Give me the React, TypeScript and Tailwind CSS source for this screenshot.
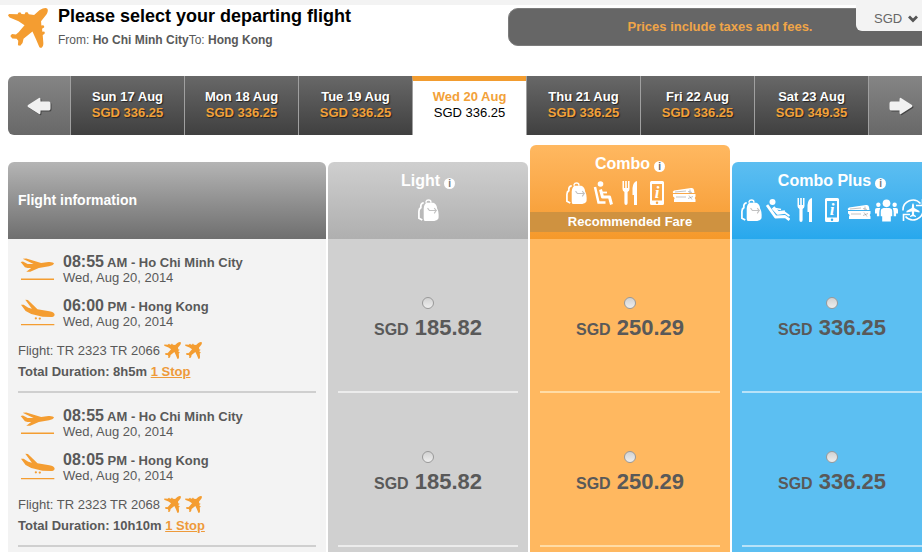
import { useState } from 'react'
import type { ReactNode } from 'react'
import clsx from 'clsx'

interface DayTab {
  label: string
  price: string
}

interface Fare {
  id: string
  name: string
  icons: (() => ReactNode)[]
  recommended?: boolean
  header: string
  cell: string
  divider: string
  info: string
}

interface Flight {
  id: string
  departTime: string
  departPeriod: string
  from: string
  arriveTime: string
  arrivePeriod: string
  to: string
  date: string
  numbers: string
  duration: string
  stops: string
  prices: Record<string, string>
}

const days: DayTab[] = [
  { label: 'Sun 17 Aug', price: 'SGD 336.25' },
  { label: 'Mon 18 Aug', price: 'SGD 336.25' },
  { label: 'Tue 19 Aug', price: 'SGD 336.25' },
  { label: 'Wed 20 Aug', price: 'SGD 336.25' },
  { label: 'Thu 21 Aug', price: 'SGD 336.25' },
  { label: 'Fri 22 Aug', price: 'SGD 336.25' },
  { label: 'Sat 23 Aug', price: 'SGD 349.35' },
]

const fares: Fare[] = [
  {
    id: 'light',
    name: 'Light',
    icons: [BagIcon],
    header: 'bg-linear-to-b from-[#cfcfcf] to-[#afafaf]',
    cell: 'bg-[#d0d0d0]',
    divider: 'border-[#ececec]',
    info: 'text-[#777]',
  },
  {
    id: 'combo',
    name: 'Combo',
    icons: [BagIcon, SeatIcon, MealIcon, PhoneIcon, TicketsIcon],
    recommended: true,
    header: 'bg-linear-to-b from-[#ffb860] to-[#f5992a]',
    cell: 'bg-[#ffb860]',
    divider: 'border-[#ffdca6]',
    info: 'text-[#666]',
  },
  {
    id: 'combo-plus',
    name: 'Combo Plus',
    icons: [BagIcon, ReclinerIcon, MealIcon, PhoneIcon, TicketsIcon, PeopleIcon, ChangeFlightIcon],
    header: 'bg-linear-to-b from-[#5cbef1] to-[#27a8ed]',
    cell: 'bg-[#5cbff2]',
    divider: 'border-[#b8e2f8]',
    info: 'text-[#777]',
  },
]

const flights: Flight[] = [
  {
    id: 'tr2066',
    departTime: '08:55',
    departPeriod: 'AM',
    from: 'Ho Chi Minh City',
    arriveTime: '06:00',
    arrivePeriod: 'PM',
    to: 'Hong Kong',
    date: 'Wed, Aug 20, 2014',
    numbers: 'TR 2323 TR 2066',
    duration: '8h5m',
    stops: '1 Stop',
    prices: { light: '185.82', combo: '250.29', 'combo-plus': '336.25' },
  },
  {
    id: 'tr2068',
    departTime: '08:55',
    departPeriod: 'AM',
    from: 'Ho Chi Minh City',
    arriveTime: '08:05',
    arrivePeriod: 'PM',
    to: 'Hong Kong',
    date: 'Wed, Aug 20, 2014',
    numbers: 'TR 2323 TR 2068',
    duration: '10h10m',
    stops: '1 Stop',
    prices: { light: '185.82', combo: '250.29', 'combo-plus': '336.25' },
  },
]

function PlaneIcon({ className }: { className?: string }) {
  return (
    <svg viewBox="24 23 121 121" fill="currentColor" className={className} aria-hidden="true">
      <path d="M143 25C146 30 144 38 139 44L124 63L125 76L130 75Q135 77 133 82L127 86L128 95L133 94Q137 97 134 102L129 105L131 130Q131 141 124 144L119 142L109 118L98 94L71 116L68 129L61 137L54 136L55 122L50 116L37 115L31 108L36 102L48 103L56 96L74 75L56 63L29 52L24 46L27 41L53 42L55 37L61 36L65 41L74 42L77 36L83 36L87 42L103 44L119 30Q136 20 143 25Z" />
    </svg>
  )
}

function TakeoffIcon() {
  return (
    <svg viewBox="60 54 106 72" fill="currentColor" className="h-6 w-9" aria-hidden="true">
      <path d="M68 59L79 58L124 72L146 69Q161 68 163 74Q160 79 148 82L117 87L91 98L79 98L94 87L83 87L75 85L62 69L69 67L83 75L101 75Z" />
      <path d="M63 119H163V123H63Z" />
    </svg>
  )
}

function LandingIcon() {
  return (
    <svg viewBox="60 178 106 84" fill="currentColor" className="h-7 w-9" aria-hidden="true">
      <path d="M76 180L84 181L113 209L149 215Q164 218 165 225Q164 232 153 232L128 231L94 223L77 214L63 195L71 195L85 204L96 207Z" />
      <circle cx="108" cy="236" r="3.500" />
      <circle cx="120" cy="237" r="3.500" />
      <path d="M63 253H164V257H63Z" />
    </svg>
  )
}

function BagIcon() {
  return (
    <svg viewBox="0 0 24 24" className="size-[23px]" fill="none" stroke="currentColor" aria-hidden="true">
      <path d="M9.500 4V2.500Q10 1 12 1Q14.500 1 14.500 3V4" strokeWidth="1.500" />
      <path d="M7 4Q4.500 4 4 7V9Q2 10 2 13V20L5.500 22" strokeWidth="1.800" />
      <path
        fill="currentColor"
        stroke="none"
        d="M10 4H17Q20.500 5 21 10Q23 13 22.500 20Q21 23 18 23H9Q7 23 7 20V10Q7.500 5 10 4Z"
      />
      <path className="opacity-60" d="M11 9.500L13 12H20L18 9.500M20 12L18 15" stroke="#999" strokeWidth="1.200" />
    </svg>
  )
}

function SeatIcon() {
  return (
    <svg viewBox="0 0 24 24" className="size-6" fill="none" stroke="currentColor" aria-hidden="true">
      <circle cx="9.500" cy="3" r="2.800" fill="currentColor" stroke="none" />
      <path d="M9.500 8.500L11.500 16H18.500L20.500 23.500" strokeWidth="3" strokeLinejoin="round" />
      <path d="M10.500 11.500H16" strokeWidth="1.800" />
      <path d="M4 6L7.500 21.500H14.500" strokeWidth="2.500" />
    </svg>
  )
}

function ReclinerIcon() {
  return (
    <svg viewBox="0 0 24 24" className="size-6" fill="none" stroke="currentColor" aria-hidden="true">
      <circle cx="6.500" cy="4" r="3" fill="currentColor" stroke="none" />
      <path d="M7 9.500L12 15L19 14" strokeWidth="3.500" strokeLinejoin="round" />
      <path d="M9 10.500L15 11.500" strokeWidth="1.500" />
      <path d="M1 7L9.500 19L19 18.500L23.500 22" strokeWidth="2.800" strokeLinejoin="round" />
      <path d="M18 14L23.500 18" strokeWidth="2" />
    </svg>
  )
}

function MealIcon() {
  return (
    <svg viewBox="0 0 24 24" className="size-6" fill="currentColor" aria-hidden="true">
      <path d="M4.500 0H6V7H7.200V0H8.800V7H10V0H11.500V8Q11.500 10 9.600 11V22Q9.600 24 8 24Q6.400 24 6.400 22V11Q4.500 10 4.500 8Z" />
      <path d="M19 0V24H16V14H14.500V7Q15 1 19 0Z" />
    </svg>
  )
}

function PhoneIcon() {
  return (
    <svg viewBox="0 0 24 24" className="size-6" aria-hidden="true">
      <path
        fill="currentColor"
        fillRule="evenodd"
        d="M6.500 0H17.500Q19 0 19 1.500V22.500Q19 24 17.500 24H6.500Q5 24 5 22.500V1.500Q5 0 6.500 0ZM7 3V19.500H17V3ZM12 20.500A1.200 1.200 0 1 0 12 23A1.200 1.200 0 1 0 12 20.500Z"
      />
      <text
        x="12"
        y="17"
        textAnchor="middle"
        fill="currentColor"
        className="font-['Liberation_Serif',serif] text-[17px] font-bold italic"
      >
        i
      </text>
    </svg>
  )
}

function TicketsIcon() {
  return (
    <svg viewBox="0 0 24 24" className="size-6" fill="currentColor" aria-hidden="true">
      <path d="M2 9.500L19 7Q21.500 6.500 22 9L22.500 12H1Q0 10.500 2 9.500Z" />
      <path d="M1 13H23.500V15.500Q22 17 23.500 18.500V21H2V18.500Q3.500 17 1 15.500Z" />
      <path
        className="opacity-50"
        fill="none"
        stroke="#888"
        d="M3 11L14 10M4 16H14M16 10.500L20 11.500M18 8.500V12.500M17 14.500L20 18.500M21 15.500L16 17.500"
      />
    </svg>
  )
}

function PeopleIcon() {
  return (
    <svg viewBox="0 0 24 24" className="size-[23px]" fill="currentColor" aria-hidden="true">
      <circle cx="12" cy="4.500" r="4" />
      <circle cx="3.500" cy="6" r="2.300" />
      <circle cx="20.500" cy="6" r="2.300" />
      <path d="M9 9.500H15Q18 10 18 13V18H16.500V23.500H7.500V18H6V13Q6 10 9 9.500Z" />
      <path d="M2 9.500H5.500Q4.500 12 4.500 14V18H2V15H0V11.500Q0 9.500 2 9.500ZM18.500 9.500H22Q24 9.500 24 11.500V15H22V18H19.500V14Q19.500 12 18.500 9.500Z" />
    </svg>
  )
}

function ChangeFlightIcon() {
  return (
    <svg viewBox="0 0 24 24" className="size-6" fill="none" stroke="currentColor" aria-hidden="true">
      <path d="M2 12.500A10 10 0 0 1 19.500 5.500M22 11.500A10 10 0 0 1 4.500 18.500" strokeWidth="1.600" />
      <path d="M21.500 1V7.500H15M2.500 23V16.500H9" strokeWidth="1.600" />
      <path
        fill="currentColor"
        stroke="none"
        d="M12 5Q13.300 6 13.200 10L18.500 13V14.500L13.200 13.500L13 16.500L15 18V19L12 18.300L9 19V18L11 16.500L10.800 13.500L5.500 14.500V13L10.800 10Q10.700 6 12 5Z"
      />
    </svg>
  )
}

function ArrowIcon({ right }: { right?: boolean }) {
  return (
    <svg
      viewBox="0 0 24 18"
      fill="#f1f1f1"
      className="h-[18px] w-6 drop-shadow-[1px_1px_0_#444]"
      aria-hidden="true"
    >
      <path
        transform={right ? 'rotate(180 12 9)' : undefined}
        d="M12 1Q13.500 0 13.500 3V4.500H22Q23.500 4.500 23.500 6.500V11.500Q23.500 13.500 22 13.500H13.500V15Q13.500 18 12 17L1 10Q0 9 1 8Z"
      />
    </svg>
  )
}

function DateBar() {
  const [selected, setSelected] = useState(3)

  return (
    <nav aria-label="Departure dates" className="flex h-[59px]">
      <button
        type="button"
        aria-label="Earlier dates"
        className="flex w-[62px] items-center justify-center rounded-l-md bg-linear-to-b from-[#858585] to-[#686868]"
      >
        <ArrowIcon />
      </button>
      {days.map((day, i) => (
        <button
          key={day.label}
          type="button"
          onClick={() => setSelected(i)}
          className={clsx(
            'flex flex-1 flex-col items-center border-l border-l-[#a0a0a0] text-[13px] leading-4',
            i === selected
              ? 'border-t-5 border-t-[#f29c2f] bg-white pt-2 text-black'
              : 'bg-linear-to-b from-[#686868] to-[#404040] pt-[13px] font-bold text-[#f2a139] text-shadow-[1px_1px_1px_#222]'
          )}
        >
          <span className={clsx('font-bold', i === selected ? 'text-[#f2a139]' : 'text-white')}>
            {day.label}
          </span>
          <span>{day.price}</span>
        </button>
      ))}
      <button
        type="button"
        aria-label="Later dates"
        className="flex w-16 items-center justify-center rounded-r-md border-l border-[#a0a0a0] bg-linear-to-b from-[#858585] to-[#686868]"
      >
        <ArrowIcon right />
      </button>
    </nav>
  )
}

function FareHeader({ fare }: { fare: Fare }) {
  return (
    <div
      className={clsx(
        'flex flex-col items-center rounded-t-md pt-[7px] text-white',
        fare.header,
        fare.recommended ? 'h-[94px]' : 'h-[77px]'
      )}
    >
      <div className="flex items-center gap-1 text-base leading-6 font-bold">
        {fare.name}
        <span
          className={clsx(
            'mt-1 size-[11px] rounded-full bg-white text-center text-[10px] leading-[11px]',
            fare.info
          )}
        >
          i
        </span>
      </div>
      <div className="mt-[5px] flex">
        {fare.icons.map((Icon, i) => (
          <span key={i} className="flex h-6 w-[27px] items-center justify-center">
            <Icon />
          </span>
        ))}
      </div>
      {fare.recommended && (
        <div className="mt-[7px] w-full bg-[#cf9240] text-center text-[13px] leading-5 font-bold">
          Recommended Fare
        </div>
      )}
    </div>
  )
}

function Leg({ icon, time, period, city, date }: {
  icon: ReactNode
  time: string
  period: string
  city: string
  date: string
}) {
  return (
    <div className="flex h-8 gap-2 pl-0.5">
      <span className="flex h-8 w-[35px] items-center justify-center text-[#f49d31]">{icon}</span>
      <div className="text-[13px]">
        <div className="h-[18px] leading-[18px] font-bold">
          <span className="text-base leading-[18px]">{time}</span> {period} - {city}
        </div>
        <div className="leading-[14px]">{date}</div>
      </div>
    </div>
  )
}

function FlightInfo({ flight }: { flight: Flight }) {
  return (
    <div className="mx-2.5 h-[154px] border-b-2 border-[#cfcfcf] pt-3.5 text-[13px]">
      <Leg
        icon={<TakeoffIcon />}
        time={flight.departTime}
        period={flight.departPeriod}
        city={flight.from}
        date={flight.date}
      />
      <div className="mt-3">
        <Leg
          icon={<LandingIcon />}
          time={flight.arriveTime}
          period={flight.arrivePeriod}
          city={flight.to}
          date={flight.date}
        />
      </div>
      <div className="mt-[11px] flex items-center gap-1 leading-[21px]">
        Flight: {flight.numbers}
        <PlaneIcon className="size-[17px] text-[#f49d31]" />
        <PlaneIcon className="size-[17px] text-[#f49d31]" />
      </div>
      <div className="leading-[21px] font-bold">
        Total Duration: {flight.duration}{' '}
        <a href="#stops" className="text-[#ee9a3a] underline">
          {flight.stops}
        </a>
      </div>
    </div>
  )
}

export default function App() {
  const [choice, setChoice] = useState('')

  return (
    <div className="relative min-h-screen overflow-hidden bg-white font-['Liberation_Sans',Arial,sans-serif] text-[#595959]">
      <div className="h-[5px] bg-[#f3f3f3]" />
      <select
        aria-label="Currency"
        className="absolute top-0 right-0 z-10 h-[31px] w-[66px] appearance-none rounded-bl-md bg-[#f3f3f3] pt-1.5 pl-[18px] text-[13px] text-[#666]"
      >
        <option>SGD</option>
        <option>USD</option>
      </select>
      <svg
        viewBox="0 0 10 8"
        className="pointer-events-none absolute top-[15px] right-1 z-10 h-2 w-2.5"
        aria-hidden="true"
      >
        <path d="M1 1.500L5 5.500L9 1.500" fill="none" stroke="#555" strokeWidth="2.800" />
      </svg>

      <div className="min-w-[940px] px-2">
        <header className="flex h-[71px] items-start pt-[3px]">
          <PlaneIcon className="size-10 text-[#f49d31]" />
          <div className="-mt-0.5 ml-2.5 w-[450px]">
            <h1 className="text-lg leading-5 font-bold text-black">Please select your departing flight</h1>
            <p className="mt-1.5 text-xs leading-4">
              From: <b>Ho Chi Minh City</b>To: <b>Hong Kong</b>
            </p>
          </div>
          <div className="h-[38px] flex-1 rounded-[10px] border border-[#7c7c7c] bg-[#666] text-center text-[13px] leading-9 font-bold text-[#f0a548]">
            Prices include taxes and fees.
          </div>
        </header>

        <DateBar />

        <table className="-mx-0.5 mt-2.5 w-[calc(100%+4px)] table-fixed border-separate border-spacing-x-0.5 border-spacing-y-0">
          <colgroup>
            <col className="w-[318px]" />
            <col />
            <col />
            <col />
          </colgroup>
          <thead>
            <tr>
              <th className="p-0 text-left align-bottom">
                <div className="h-[77px] rounded-t-md bg-linear-to-b from-[#b5b5b5] to-[#6f6f6f] pl-2.5 text-sm leading-[77px] font-bold text-white">
                  Flight information
                </div>
              </th>
              {fares.map((fare) => (
                <th key={fare.id} className="p-0 align-bottom">
                  <FareHeader fare={fare} />
                </th>
              ))}
            </tr>
          </thead>
          <tbody>
            {flights.map((flight) => (
              <tr key={flight.id}>
                <td className="bg-[#f3f3f3] p-0">
                  <FlightInfo flight={flight} />
                </td>
                {fares.map((fare) => (
                  <td key={fare.id} className={clsx('p-0', fare.cell)}>
                    <label
                      className={clsx(
                        'mx-2.5 flex h-[154px] flex-col items-center border-b-2 pt-[58px] font-bold',
                        fare.divider
                      )}
                    >
                      <input
                        type="radio"
                        name="fare"
                        checked={choice === `${flight.id}-${fare.id}`}
                        onChange={() => setChoice(`${flight.id}-${fare.id}`)}
                        className="size-3 appearance-none rounded-full border border-[#999] bg-linear-to-b from-[#d2d2d2] to-[#eee] checked:bg-[#555]"
                      />
                      <span className="mt-[5px] text-[22px] leading-7">
                        <span className="text-base">SGD</span> {flight.prices[fare.id]}
                      </span>
                    </label>
                  </td>
                ))}
              </tr>
            ))}
          </tbody>
          <tfoot>
            <tr className="h-[5px]">
              <td className="bg-[#f3f3f3] p-0" />
              {fares.map((fare) => (
                <td key={fare.id} className={clsx('p-0', fare.cell)} />
              ))}
            </tr>
          </tfoot>
        </table>
      </div>
    </div>
  )
}
